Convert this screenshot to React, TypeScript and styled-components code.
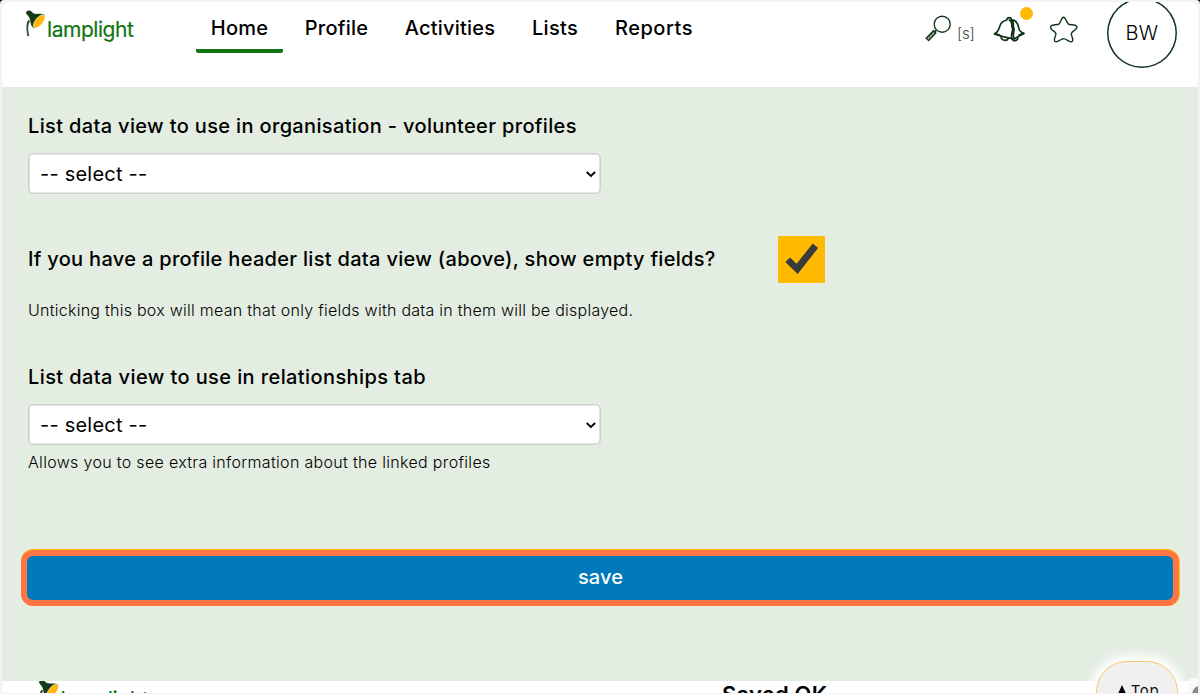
import React from 'react';
import styled, { createGlobalStyle } from 'styled-components';

const GlobalStyle = createGlobalStyle`
  *, *::before, *::after { box-sizing: border-box; }
  html, body { margin: 0; background: #000; overflow: hidden; }
  body { font-family: Inter, "Liberation Sans", sans-serif; color: #000; }
`;

const Frame = styled.div`
  width: 1200px;
  height: 694px;
  padding: 2px 2px 1px;
  background: #f3f2f7;
  border-radius: 4px 4px 0 0;
  overflow: hidden;
`;

const Page = styled.div`
  position: relative;
  display: flex;
  flex-direction: column;
  height: 691px;
  background: #fff;
  border-radius: 8px 8px 0 0;
  overflow: hidden;
`;

const Header = styled.header`
  display: flex;
  align-items: flex-start;
  flex: none;
  height: 85px;
  padding-left: 23px;
`;

const Brand = styled.div<{ $large?: boolean }>`
  display: flex;
  align-items: flex-start;
  flex: none;
  width: 171px;
  height: 50px;
  padding-top: ${p => (p.$large ? 0 : 8)}px;
  transform: ${p => (p.$large ? 'translate(1px, -1.5px) scale(1.02)' : 'none')};
  transform-origin: 0 0;
`;

const BrandName = styled.span`
  margin: 6px 0 0 1px;
  font-size: 21px;
  line-height: 28px;
  font-weight: 400;
  letter-spacing: -0.45px;
  color: #117611;
  -webkit-text-stroke: 0.2px #117611;
`;

const Nav = styled.nav`
  display: flex;
  align-items: flex-start;
  gap: 7px;
  flex: 1;
`;

const NavItem = styled.a<{ $active?: boolean; $width: number; $track: number }>`
  width: ${p => p.$width}px;
  height: 51px;
  padding-top: 12px;
  border-bottom: 4px solid ${p => (p.$active ? '#117611' : 'transparent')};
  border-radius: 2px;
  font-size: 20px;
  line-height: 28px;
  font-weight: 500;
  letter-spacing: ${p => p.$track}px;
  text-align: center;
  white-space: nowrap;
`;

const Tools = styled.div`
  display: flex;
  align-items: flex-start;
  width: 273px;
  height: 85px;
`;

const Shortcut = styled.span`
  width: 18px;
  margin: 22px 0 0 5px;
  font-size: 15px;
  line-height: 20px;
  font-weight: 300;
  letter-spacing: -0.2px;
  color: #3c4a3c;
`;

const BellBox = styled.div`
  position: relative;
  width: 34px;
  height: 30px;
  margin: 13px 0 0 18px;
`;

const Dot = styled.i`
  position: absolute;
  left: 27px;
  top: -8px;
  width: 13px;
  height: 13px;
  border-radius: 50%;
  background: #ffb900;
`;

const StarBox = styled.div`
  width: 28px;
  height: 28px;
  margin: 14px 0 0 23px;
`;

const Avatar = styled.div`
  flex: none;
  display: flex;
  align-items: center;
  justify-content: center;
  width: 70px;
  height: 70px;
  margin: -4px 0 0 29px;
  box-shadow: inset 0 0 0 1.5px #11351a;
  border-radius: 50%;
  font-size: 20px;
  font-weight: 350;
  letter-spacing: 0.3px;
`;

const Main = styled.main`
  flex: none;
  height: 593.5px;
  padding: 26px 19px 0 19px;
  background: #e3ede1;
`;

const Form = styled.form`
  padding-left: 7px;
`;

const Label = styled.label<{ $track: number }>`
  display: block;
  font-size: 20px;
  line-height: 26px;
  font-weight: 500;
  letter-spacing: ${p => p.$track}px;
  white-space: nowrap;
`;

const SelectField = styled.div`
  display: flex;
  align-items: center;
  justify-content: space-between;
  width: 573px;
  height: 41px;
  margin-top: 14px;
  padding: 0 5px 0 12px;
  box-shadow: inset 0 0 0 1.6px #d0cfd0;
  border-radius: 5px;
  background: #fff;
  font-size: 20px;
  letter-spacing: 0.22px;
`;

const CheckRow = styled.div`
  display: flex;
  align-items: center;
  height: 47px;
  margin-top: 42px;
`;

const CheckLabel = styled(Label)`
  width: 750px;
  padding-bottom: 2px;
`;

const CheckBox = styled.div`
  width: 47px;
  height: 47px;
  background: #ffb900;
  border-radius: 1px;
`;

const Hint = styled.p<{ $top: number; $track: number }>`
  margin: ${p => p.$top}px 0 0;
  font-size: 16px;
  line-height: 22px;
  font-weight: 300;
  letter-spacing: ${p => p.$track}px;
  white-space: nowrap;
`;

const Relationship = styled.section`
  margin-top: 43px;
`;

const SaveButton = styled.button`
  display: block;
  width: 1158px;
  height: 56px;
  margin: 77px 0 0;
  padding: 0 0 2px 1px;
  border: 6px solid #ff7543;
  border-radius: 12px;
  outline: none;
  box-shadow: 0 -1px 0 #ffb900, 1px 0 0 #ffc02a;
  background: #007aba;
  color: #fff;
  font: 500 20px/40px Inter, "Liberation Sans", sans-serif;
  letter-spacing: 0.1px;
`;

const Footer = styled.footer`
  display: flex;
  height: 12px;
  padding-left: 35px;
  overflow: hidden;
`;

const Status = styled.span`
  margin: 0 0 0 514px;
  font-size: 22px;
  line-height: 27px;
  font-weight: 600;
  letter-spacing: 0.2px;
  white-space: nowrap;
`;

const TopButton = styled.button`
  position: absolute;
  left: 1094px;
  top: 659px;
  width: 82px;
  height: 64px;
  padding: 17px 0 0 2px;
  border: 1px solid #f7c56c;
  border-radius: 31px;
  background: #f0f0f0;
  box-shadow: 0 0 10px 6px #fff;
  color: #111;
  font: 400 15px/24px Inter, "DejaVu Sans", sans-serif;
  display: flex;
  justify-content: center;
  letter-spacing: 0.6px;
`;

const Triangle = styled.i`
  width: 0;
  height: 0;
  margin: 6px 4px 0 0;
  border: 5px solid transparent;
  border-top: 0;
  border-bottom: 11px solid #000;
`;

const Corner = styled.div`
  position: absolute;
  left: 1187px;
  top: 676px;
  width: 9px;
  height: 15px;
  background: #fafafa;
  overflow: hidden;
`;

const LampIcon = () => (
  <svg width="21" height="28" viewBox="0 0 21 28" fill="none">
    <path d="M3.3 10C.9 13 1.1 19 2.4 26.3L4.2 26C2.8 19 2.8 14 5.2 11" fill="#314d34" />
    <path d="M1 3.2C.9 1 3.2-.2 5.5.7L8.7 3.5C12 4.5 16 3 20 4.8L9.3 18.2C5 16.5 6 12 4.3 7.6Z" fill="#153b18" />
    <ellipse cx="14.2" cy="11.3" rx="8" ry="3.7" transform="rotate(-51 14.2 11.3)" fill="#ffb60d" stroke="#fff1cc" strokeWidth=".6" />
  </svg>
);

const SearchGlyph = styled.svg`
  margin-top: 13px;
`;

const SearchIcon = () => (
  <SearchGlyph width="27" height="27" viewBox="0 0 27 27" fill="none" stroke="#17391d">
    <circle cx="17.2" cy="9.2" r="8" strokeWidth="1.35" />
    <path d="M11.2 15.3 9.5 17" strokeWidth="2" />
    <path d="m1.2 23.2 7.2-7.3 2.3 2.2-7 7.4Z" fill="#a7b0a7" strokeWidth="1.5" />
    <path d="m3.5 21 2.3 2.2M5.7 18.8 8 21" strokeWidth=".8" />
  </SearchGlyph>
);

const BellIcon = () => (
  <svg width="34" height="30" viewBox="0 0 34 30" fill="none" stroke="#0d2f15" strokeWidth="1.6" strokeLinecap="round" strokeLinejoin="round">
    <path d="M21 24C15 23 8 21.3 1.5 19C5 17 6 14.2 6.8 11.2C8 7 10 5.8 13.8 5C14.2 1.9 18 1.9 18.5 4.9C23.5 5.2 25.2 9.2 25.8 13.2C26.2 15.9 28 17.4 30.8 18.4L27 20.5Z" />
    <path d="M16.2 5C20.4 6.5 17.4 10.5 19.7 14.2C19.2 17.8 17.8 20.5 18.6 23.4M18.4 4.9C22 7 19.1 10.8 21.2 14.2C20.1 18.2 20 21 21 24" />
    <path d="M8 21.6C8.5 25.8 14.2 26.8 15.4 23.1M19.1 24C20 27.2 25.5 25.8 24.8 22" />
    <path d="M2 18.8 6.5 20.2M26.5 20 30.6 18.4" strokeWidth="2.1" />
  </svg>
);

const StarIcon = () => (
  <svg width="28" height="28" viewBox="0 0 28 28" fill="none" stroke="#11351a" strokeWidth="1.4" strokeLinejoin="round">
    <path d="M11.5 3.2Q13.6-.8 15.6 3.2L17.7 7.2Q18.2 8.4 19.5 8.5L24 9Q29.1 10 25.4 13.5L22 16.4Q21 17.3 21.4 18.6L22.6 22.6Q23.4 27.2 19 25.2L15 23Q13.7 22.3 12.3 23L8.2 25.2Q3.7 27.2 4.6 22.6L5.8 18.6Q6.2 17.3 5.2 16.4L1.7 13.5Q-1.2 10 3.4 9L7.8 8.5Q9.1 8.4 9.6 7.2Z" />
  </svg>
);

const Chevron = () => (
  <svg width="10" height="8" viewBox="0 0 10 8" fill="none" stroke="#000" strokeWidth="1.8">
    <path d="m.7 2 4.2 4 4.2-4" />
  </svg>
);

const Tick = () => (
  <svg width="47" height="47" viewBox="0 0 47 47">
    <path d="m7.3 26.1 4.8-4.7 6.5 6.4L34.8 7.4l5.3 4.5-20.4 26.2Z" fill="#3a3a3a" />
  </svg>
);

const Select = () => (
  <SelectField role="combobox">
    <span>-- select --</span>
    <Chevron />
  </SelectField>
);

const links = [
  { name: 'Home', width: 87, track: 0.2 },
  { name: 'Profile', width: 93, track: 0.25 },
  { name: 'Activities', width: 120, track: 0.2 },
  { name: 'Lists', width: 76, track: 0.3 },
  { name: 'Reports', width: 108, track: 0.5 },
];

export default function App() {
  return (
    <>
      <GlobalStyle />
      <Frame>
        <Page>
          <Header>
            <Brand>
              <LampIcon />
              <BrandName>lamplight</BrandName>
            </Brand>
            <Nav>
              {links.map((link, i) => (
                <NavItem key={link.name} $active={i === 0} $width={link.width} $track={link.track}>
                  {link.name}
                </NavItem>
              ))}
            </Nav>
            <Tools>
              <SearchIcon />
              <Shortcut>[s]</Shortcut>
              <BellBox>
                <BellIcon />
                <Dot />
              </BellBox>
              <StarBox>
                <StarIcon />
              </StarBox>
              <Avatar>BW</Avatar>
            </Tools>
          </Header>
          <Main>
            <Form>
              <Label $track={0.35}>List data view to use in organisation - volunteer profiles</Label>
              <Select />
              <CheckRow>
                <CheckLabel $track={0.31}>If you have a profile header list data view (above), show empty fields?</CheckLabel>
                <CheckBox>
                  <Tick />
                </CheckBox>
              </CheckRow>
              <Hint $top={16} $track={0.26}>Unticking this box will mean that only fields with data in them will be displayed.</Hint>
              <Relationship>
                <Label $track={0.4}>List data view to use in relationships tab</Label>
                <Select />
                <Hint $top={6} $track={0.32}>Allows you to see extra information about the linked profiles</Hint>
              </Relationship>
            </Form>
            <SaveButton>save</SaveButton>
          </Main>
          <Footer>
            <Brand $large>
              <LampIcon />
              <BrandName>lamplight</BrandName>
            </Brand>
            <Status>Saved OK</Status>
          </Footer>
          <TopButton>
            <Triangle />
            Top
          </TopButton>
          <Corner>
            <svg width="9" height="15" viewBox="0 0 9 15">
              <path d="M9 7Q4 9 3 15H9Z" fill="#888" />
            </svg>
          </Corner>
        </Page>
      </Frame>
    </>
  );
}
